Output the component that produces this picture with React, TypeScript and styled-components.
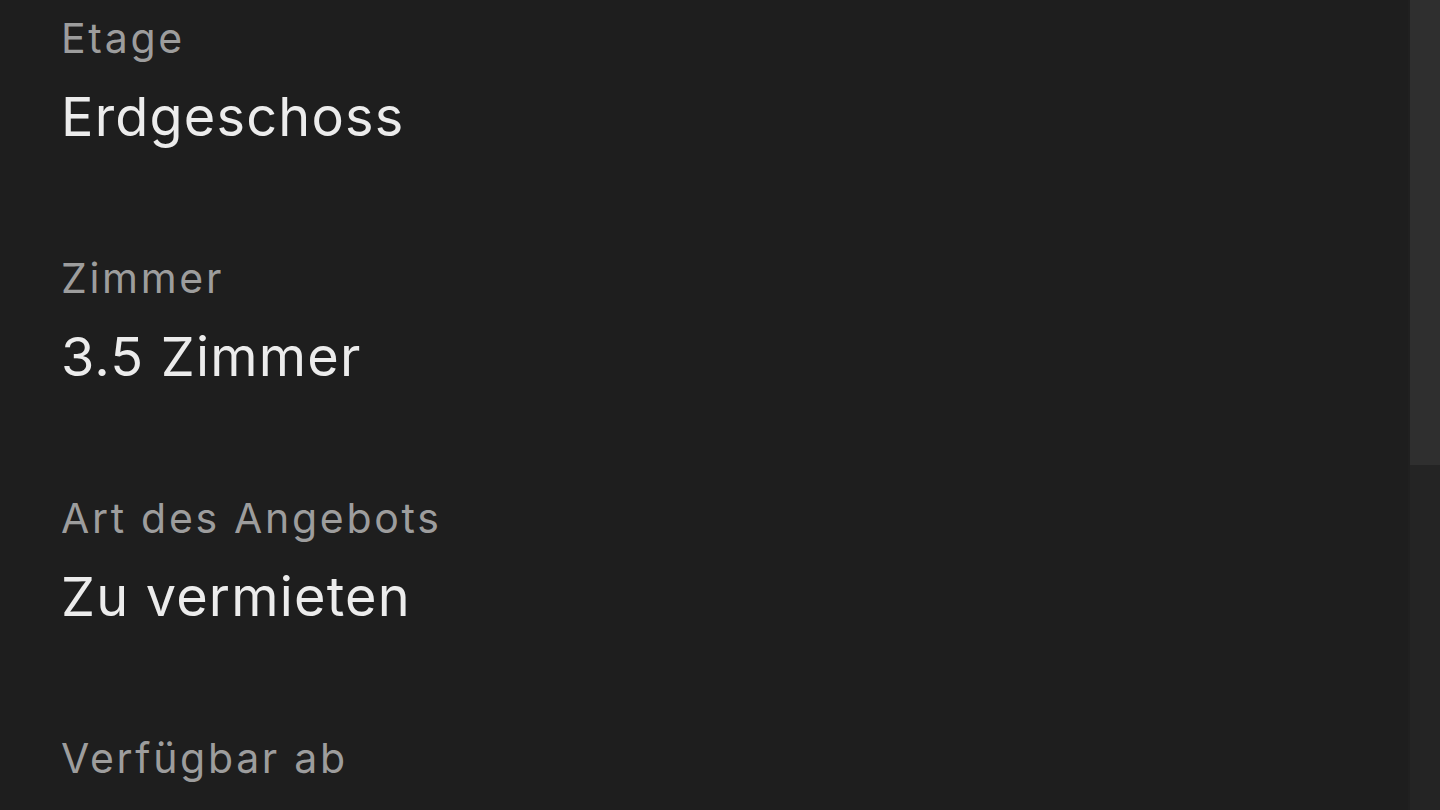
import styled, { createGlobalStyle } from "styled-components";

const GlobalStyle = createGlobalStyle`
  html, body {
    margin: 0;
    padding: 0;
    background: #1e1e1e;
    overflow: hidden;
  }
`;

const Screen = styled.div`
  display: flex;
  width: 1440px;
  height: 810px;
  background: #1e1e1e;
  font-family: Inter, "Noto Sans", sans-serif;
  overflow: hidden;
`;

const Details = styled.div`
  flex: 1;
  padding: 13px 0 0 61px;
`;

const Field = styled.div`
  display: flex;
  flex-direction: column;
  gap: 21px;
  padding-bottom: 103px;
`;

const Label = styled.div`
  font-size: 41px;
  line-height: 50px;
  letter-spacing: 2.7px;
  color: #9d9d9d;
`;

const Value = styled.div`
  font-size: 54px;
  line-height: 66px;
  letter-spacing: 1.2px;
  color: #ececec;
`;

const Track = styled.div`
  width: 30px;
  background: #242424;
  border-left: 2px solid #202020;
`;

const Thumb = styled.div<{ $height: number }>`
  height: ${(p) => p.$height}px;
  background: #2f2f2f;
`;

const fields = [
  { label: "Etage", value: "Erdgeschoss" },
  { label: "Zimmer", value: "3.5 Zimmer" },
  { label: "Art des Angebots", value: "Zu vermieten" },
  { label: "Verfügbar ab", value: "Nach Vereinbarung" },
];

export default function App() {
  return (
    <>
      <GlobalStyle />
      <Screen>
        <Details>
          {fields.map((f) => (
            <Field key={f.label}>
              <Label>{f.label}</Label>
              <Value>{f.value}</Value>
            </Field>
          ))}
        </Details>
        <Track>
          <Thumb $height={465} />
        </Track>
      </Screen>
    </>
  );
}
